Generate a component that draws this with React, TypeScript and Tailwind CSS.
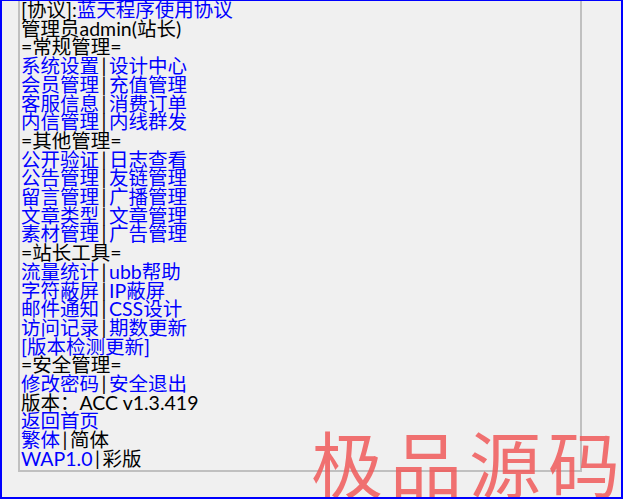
import React from "react";

type Item = { label: string; link?: boolean };

const blue = "text-[#0000ff]";

function Bar() {
  return <span className="inline-block w-[10px] text-center">|</span>;
}

function Pair({ a, b }: { a: string; b: string }) {
  return (
    <div>
      <span className={blue}>{a}</span>
      <Bar />
      <span className={blue}>{b}</span>
    </div>
  );
}

function Line({ parts }: { parts: Item[] }) {
  return (
    <div>
      {parts.map((p, i) =>
        p.label === "|" ? (
          <Bar key={i} />
        ) : (
          <span key={i} className={p.link ? blue : ""}>
            {p.label}
          </span>
        ),
      )}
    </div>
  );
}

const general: [string, string][] = [
  ["系统设置", "设计中心"],
  ["会员管理", "充值管理"],
  ["客服信息", "消费订单"],
  ["内信管理", "内线群发"],
];

const other: [string, string][] = [
  ["公开验证", "日志查看"],
  ["公告管理", "友链管理"],
  ["留言管理", "广播管理"],
  ["文章类型", "文章管理"],
  ["素材管理", "广告管理"],
];

const tools: [string, string][] = [
  ["流量统计", "ubb帮助"],
  ["字符蔽屏", "IP蔽屏"],
  ["邮件通知", "CSS设计"],
  ["访问记录", "期数更新"],
];

export default function App() {
  return (
    <div
      className="relative h-[499px] w-[623px] overflow-hidden border-2 border-t border-[#0000ff] bg-[#f0f0f0] text-black"
      style={{ fontFamily: 'Lato, "Noto Sans CJK SC", sans-serif' }}
    >
      <div className="ml-[16px] -mt-[2px] w-[564px] border-2 border-[#c0c0c0] pl-px pb-px text-[19.5px] leading-[18.7px]">
        <Line parts={[{ label: "[协议]:" }, { label: "蓝天程序使用协议", link: true }]} />
        <div>管理员admin(站长)</div>
        <div>=常规管理=</div>
        {general.map(([a, b]) => (
          <Pair key={a} a={a} b={b} />
        ))}
        <div>=其他管理=</div>
        {other.map(([a, b]) => (
          <Pair key={a} a={a} b={b} />
        ))}
        <div>=站长工具=</div>
        {tools.map(([a, b]) => (
          <Pair key={a} a={a} b={b} />
        ))}
        <div className={blue}>[版本检测更新]</div>
        <div>=安全管理=</div>
        <Pair a="修改密码" b="安全退出" />
        <div>版本：ACC v1.3.419</div>
        <div className={blue}>返回首页</div>
        <Line parts={[{ label: "繁体", link: true }, { label: "|" }, { label: "简体" }]} />
        <Line parts={[{ label: "WAP1.0", link: true }, { label: "|" }, { label: "彩版" }]} />
      </div>

      {/* watermark */}
      <div
        className="pointer-events-none absolute left-[309px] top-[424px] whitespace-nowrap text-[72px] font-normal leading-none tracking-[7px] text-[#f05a5a] opacity-85"
        style={{ fontFamily: '"Noto Sans CJK SC", sans-serif' }}
      >
        极品源码
      </div>
    </div>
  );
}
